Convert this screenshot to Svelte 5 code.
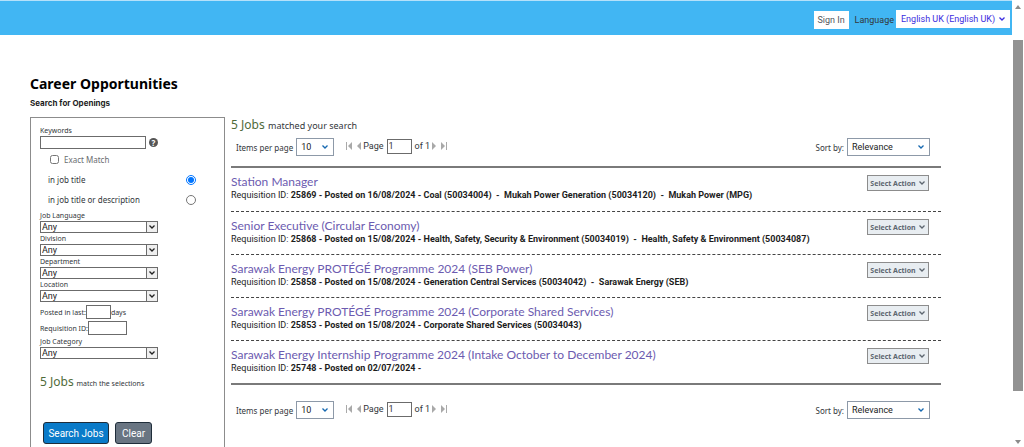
<script>
    let keywords = $state('');
    let exactMatch = $state(false);
    let searchIn = $state('title');
    let postedDays = $state('');
    let requisitionId = $state('');

    const filters = ['Job Language', 'Division', 'Department', 'Location'];

    const jobs = [
        {
            title: 'Station Manager',
            info: '25869 - Posted on 16/08/2024 - Coal (50034004)\u00a0 -\u00a0 Mukah Power Generation (50034120)\u00a0 -\u00a0 Mukah Power (MPG)'
        },
        {
            title: 'Senior Executive (Circular Economy)',
            info: '25868 - Posted on 15/08/2024 - Health, Safety, Security & Environment (50034019)\u00a0 -\u00a0 Health, Safety & Environment (50034087)'
        },
        {
            title: 'Sarawak Energy PROTÉGÉ Programme 2024 (SEB Power)',
            info: '25858 - Posted on 15/08/2024 - Generation Central Services (50034042)\u00a0 -\u00a0 Sarawak Energy (SEB)'
        },
        {
            title: 'Sarawak Energy PROTÉGÉ Programme 2024 (Corporate Shared Services)',
            info: '25853 - Posted on 15/08/2024 - Corporate Shared Services (50034043)'
        },
        {
            title: 'Sarawak Energy Internship Programme 2024 (Intake October to December 2024)',
            info: '25748 - Posted on 02/07/2024 -'
        }
    ];
</script>

{#snippet chevron()}
    <svg class="chevron" viewBox="0 0 8 8" aria-hidden="true">
        <path d="M1.5 2.5 4 5 6.5 2.5" fill="none" stroke="currentColor" stroke-width="1.3" />
    </svg>
{/snippet}

{#snippet filter(name)}
    <label class="filter">
        <span>{name}</span>
        <span class="filter-select">
            <select><option>Any</option></select>
            <span class="filter-arrow">{@render chevron()}</span>
        </span>
    </label>
{/snippet}

{#snippet pager()}
    <div class="pager">
        <label class="per-page">
            Items per page
            <span class="select-box">
                <select><option>10</option></select>
                {@render chevron()}
            </span>
        </label>
        <div class="page-nav">
            <button class="nav-button" aria-label="First page">
                <svg width="7" height="8" viewBox="0 0 7 8"><path d="M0 0h1v8H0zM6 0v8L2 4z" fill="#a9a9a9" /></svg>
            </button>
            <button class="nav-button previous" aria-label="Previous page">
                <svg width="4" height="8" viewBox="0 0 4 8"><path d="M4 0v8L0 4z" fill="#a9a9a9" /></svg>
            </button>
            <label class="page-number">Page <input type="text" value="1" /></label>
            <span>of 1</span>
            <button class="nav-button next" aria-label="Next page">
                <svg width="4" height="8" viewBox="0 0 4 8"><path d="M0 0v8l4-4z" fill="#a9a9a9" /></svg>
            </button>
            <button class="nav-button" aria-label="Last page">
                <svg width="7" height="8" viewBox="0 0 7 8"><path d="M5 0h1v8H5zM0 0v8l4-4z" fill="#a9a9a9" /></svg>
            </button>
        </div>
        <label class="sort">
            Sort by:
            <span class="select-box sort-box">
                <select><option>Relevance</option></select>
                {@render chevron()}
            </span>
        </label>
    </div>
{/snippet}

<div class="window">
    <div class="page">
        <header>
            <button class="sign-in">Sign In</button>
            <label for="language">Language</label>
            <span class="language-box">
                <select id="language"><option>English UK (English UK)</option></select>
                {@render chevron()}
            </span>
        </header>

        <main>
            <h1>Career Opportunities</h1>
            <h2>Search for Openings</h2>

            <div class="columns">
                <form class="search-panel" onsubmit={(e) => e.preventDefault()}>
                    <label class="small-label" for="keywords">Keywords</label>
                    <div class="keywords-row">
                        <input id="keywords" type="text" bind:value={keywords} />
                        <button type="button" class="help" aria-label="Help">?</button>
                    </div>
                    <label class="exact">
                        <input type="checkbox" bind:checked={exactMatch} />
                        Exact Match
                    </label>
                    <label class="scope">
                        in job title
                        <input type="radio" name="scope" value="title" bind:group={searchIn} />
                    </label>
                    <label class="scope">
                        in job title or description
                        <input type="radio" name="scope" value="description" bind:group={searchIn} />
                    </label>

                    <div class="filters">
                        {#each filters as name}
                            {@render filter(name)}
                        {/each}
                    </div>

                    <div class="inline-field">
                        <label for="posted">Posted in last:</label>
                        <input id="posted" class="days" type="text" bind:value={postedDays} />
                        <span>days</span>
                    </div>
                    <div class="inline-field">
                        <label for="requisition">Requisition ID:</label>
                        <input id="requisition" class="requisition" type="text" bind:value={requisitionId} />
                    </div>
                    {@render filter('Job Category')}

                    <p class="matches"><span class="count">5 Jobs</span> match the selections</p>

                    <div class="buttons">
                        <button type="submit" class="search">Search Jobs</button>
                        <button type="reset" class="clear">Clear</button>
                    </div>
                </form>

                <section class="results">
                    <p class="summary"><span class="count">5 Jobs</span> matched your search</p>
                    {@render pager()}
                    <ul class="jobs">
                        {#each jobs as job}
                            <li>
                                <div class="job-text">
                                    <a href="#job">{job.title}</a>
                                    <p>Requisition ID: <b>{job.info}</b></p>
                                </div>
                                <button class="action">Select Action {@render chevron()}</button>
                            </li>
                        {/each}
                    </ul>
                    {@render pager()}
                </section>
            </div>
        </main>
    </div>

    <div class="scrollbar" aria-hidden="true">
        <svg width="6" height="4" viewBox="0 0 6 4"><path d="M0 4h6L3 0z" fill="#8b8b8b" /></svg>
        <div class="thumb"></div>
        <svg width="6" height="4" viewBox="0 0 6 4"><path d="M0 0h6L3 4z" fill="#8b8b8b" /></svg>
    </div>
</div>

<style>
    :global(body) {
        margin: 0;
        background: #fff;
    }

    .window {
        display: flex;
        height: 100vh;
        overflow: hidden;
        font-family: "Noto Sans", "Open Sans", sans-serif;
        font-size: 8px;
        color: #32363a;
    }

    .window * {
        box-sizing: border-box;
    }

    button,
    input,
    select {
        margin: 0;
        padding: 0;
        font: inherit;
        color: inherit;
        border-radius: 0;
    }

    input[type="text"] {
        border: 1px solid #6b6b6b;
        background: #fff;
    }

    select {
        appearance: none;
        border: none;
        background: transparent;
        width: 100%;
        height: 100%;
        font-family: Roboto, sans-serif;
        font-size: 9px;
    }

    .chevron {
        width: 8px;
        height: 8px;
        flex: none;
    }

    .page {
        flex: 1;
        min-width: 0;
    }

    header {
        display: flex;
        align-items: center;
        justify-content: flex-end;
        height: 35px;
        padding: 4px 2px 0 0;
        border-top: 1px solid #b5e1fa;
        background: #41b6f3;
        font-family: Roboto, sans-serif;
        font-size: 9px;
    }

    .sign-in {
        width: 35px;
        height: 18px;
        margin-right: 6px;
        border: none;
        background: #fff;
        color: #51565c;
    }

    header label {
        margin-right: 2px;
    }

    .language-box,
    .select-box,
    .filter-select {
        display: grid;
        align-items: center;
    }

    .language-box > :global(*),
    .select-box > :global(*) {
        grid-area: 1 / 1;
    }

    .language-box .chevron,
    .select-box .chevron {
        justify-self: end;
        margin-right: 4px;
        pointer-events: none;
    }

    .language-box {
        width: 114px;
        height: 18px;
        margin-bottom: 2px;
        background: #fff;
        color: #3c2de0;
    }

    .language-box select {
        padding-left: 5px;
    }

    main {
        padding: 39px 71px 0 30px;
    }

    h1 {
        margin: 0;
        font-size: 14px;
        line-height: 20px;
        color: #000;
    }

    h2 {
        margin: 3px 0 8px;
        font-family: Inter, sans-serif;
        font-size: 8px;
        line-height: 12px;
        color: #1d1d1d;
    }

    .columns {
        display: flex;
        gap: 6px;
    }

    .search-panel {
        flex: none;
        width: 195px;
        padding: 8px 28px 16px 9px;
        border: 1px solid #8c8c8c;
        font-size: 7px;
    }

    .small-label {
        display: block;
        line-height: 10px;
    }

    .keywords-row {
        display: flex;
        align-items: center;
        gap: 3px;
    }

    .keywords-row input {
        width: 106px;
        height: 13px;
    }

    .help {
        width: 9px;
        height: 9px;
        border: none;
        border-radius: 50%;
        background: #555;
        color: #fff;
        font-size: 8px;
        font-weight: 700;
        line-height: 9px;
    }

    .exact {
        display: flex;
        align-items: center;
        gap: 5px;
        height: 20px;
        padding-left: 10px;
        font-size: 8px;
        color: #6a6d70;
    }

    .exact input {
        width: 9px;
        height: 9px;
    }

    .scope {
        display: flex;
        align-items: center;
        justify-content: space-between;
        height: 19px;
        padding-left: 8px;
        font-size: 8px;
    }

    .scope input {
        width: 10px;
        height: 10px;
    }

    .exact + .scope {
        height: 21px;
    }

    .filters {
        padding-top: 1px;
        margin-bottom: 2px;
    }

    .filter {
        display: block;
        width: 118px;
        line-height: 11px;
    }

    .filter > span:first-child {
        display: block;
    }

    .filter-select {
        grid-template-columns: 1fr 11px;
        height: 12px;
        border: 1px solid #6b6b6b;
        color: #222;
    }

    .filter-select select {
        padding-left: 1px;
        line-height: 10px;
    }

    .filter-arrow {
        display: flex;
        align-items: center;
        justify-content: center;
        height: 10px;
        border-left: 1px solid #6b6b6b;
        background: #efefef;
        pointer-events: none;
    }

    .inline-field {
        display: flex;
        align-items: center;
        height: 16px;
    }

    .inline-field input {
        height: 14px;
    }

    .days {
        width: 25px;
    }

    .requisition {
        width: 39px;
    }

    .count {
        margin-right: 1px;
        font-size: 12px;
        color: #4f6b3a;
    }

    .matches {
        margin: 15px 0 30px;
        line-height: 16px;
    }

    .buttons {
        display: flex;
        gap: 6px;
        padding-left: 3px;
    }

    .buttons button {
        height: 22px;
        border: 1px solid #1f2d3a;
        border-radius: 3px;
        font-family: Roboto, sans-serif;
        font-size: 10px;
        color: #fff;
    }

    .buttons .search {
        width: 66px;
        background: #0a7bc9;
    }

    .buttons .clear {
        width: 37px;
        background: #697582;
    }

    .results {
        flex: 1;
        min-width: 0;
    }

    .summary {
        margin: 0;
        font-size: 9px;
        line-height: 16px;
    }

    .pager {
        display: flex;
        align-items: center;
        height: 32px;
        padding: 0 11px 6px 5px;
    }

    .per-page,
    .sort {
        display: flex;
        align-items: center;
        gap: 3px;
    }

    .select-box {
        width: 38px;
        height: 18px;
        border: 1px solid #8d99a8;
        background: #fff;
    }

    .select-box select {
        padding-left: 4px;
        color: #222;
    }

    .select-box .chevron {
        color: #1668b0;
    }

    .page-nav {
        display: flex;
        align-items: center;
        margin-left: 12px;
        padding-bottom: 2px;
        font-family: Roboto, sans-serif;
        font-size: 9px;
    }

    .nav-button {
        display: flex;
        border: none;
        background: none;
    }

    .previous {
        margin: 0 2px 0 4px;
    }

    .next {
        margin: 0 5px 0 2px;
    }

    .page-number {
        display: flex;
        align-items: center;
        gap: 3px;
        margin-right: 3px;
    }

    .page-number input {
        width: 25px;
        height: 15px;
        padding-left: 1px;
    }

    .sort {
        margin-left: auto;
    }

    .sort-box {
        width: 83px;
    }

    .jobs {
        margin: 0 0 12px;
        padding: 0;
        list-style: none;
        border-top: 2px solid #7a7a7a;
        border-bottom: 2px solid #7a7a7a;
    }

    .jobs li {
        display: flex;
        align-items: flex-start;
        justify-content: space-between;
        height: 43px;
        padding: 7px 12px 0 0;
    }

    .jobs li + li {
        border-top: 1px dashed #444;
    }

    .jobs a {
        display: block;
        font-family: Lato, sans-serif;
        font-size: 12px;
        line-height: 14px;
        color: #6c5bb0;
        text-decoration: none;
    }

    .jobs p {
        margin: 0;
        font-family: Roboto, sans-serif;
        font-size: 9px;
        line-height: 12px;
        color: #1d1d1d;
    }

    .action {
        display: flex;
        align-items: center;
        justify-content: center;
        gap: 2px;
        width: 62px;
        height: 16px;
        border: 1px solid #8c8c8c;
        background: #e8edf1;
        font-size: 7px;
        font-weight: 700;
        white-space: nowrap;
        color: #5d6670;
    }

    .scrollbar {
        display: flex;
        flex-direction: column;
        align-items: center;
        flex: none;
        width: 12px;
        padding: 5px 0 3px;
    }

    .thumb {
        width: 10px;
        height: 80%;
        margin: 31px 0 auto;
        background: #929292;
    }
</style>
